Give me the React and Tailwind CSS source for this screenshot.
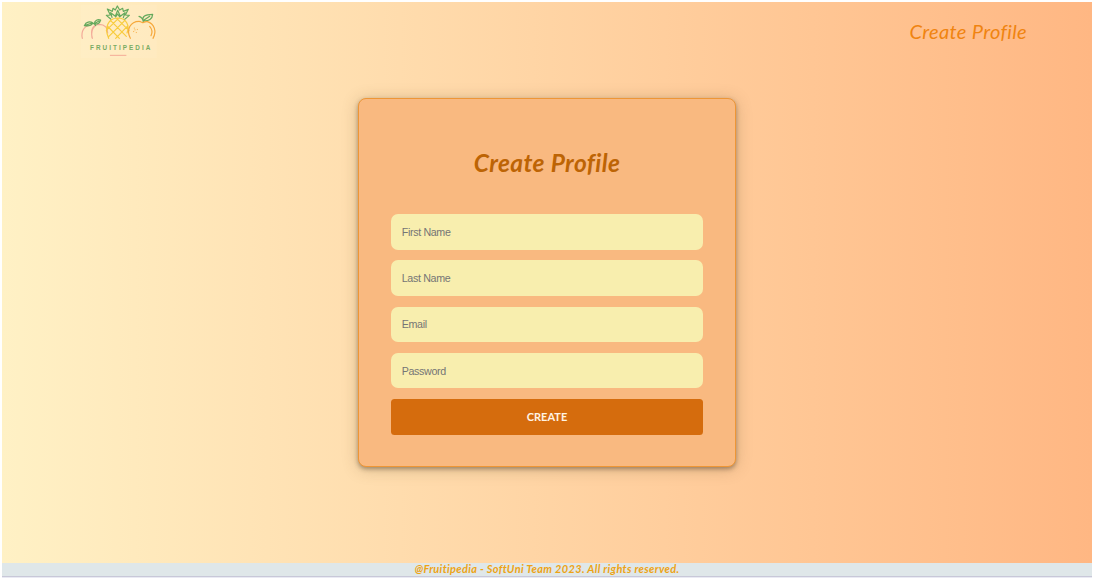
function Logo() {
  return (
    <svg className="h-16 w-[100px]" viewBox="0 0 300 192" fill="none" strokeWidth="3.6" strokeLinecap="round" strokeLinejoin="round">
      <rect x="32" y="14" width="228" height="160" fill="#ffffff" opacity="0.07" />
      <g stroke="#f3aa98">
        <path d="M37 115C32 94 43 77 62 75M67 115C60 88 70 74 87 73C105 73 114 84 113 99M74 79C66 87 63 98 66 113" />
      </g>
      <g stroke="#65a95c">
        <path d="M43 77C48 65 60 63 69 69C63 78 53 79 43 77ZM43 77L66 69M69 70C73 72 76 74 77 77M73 71C74 61 83 57 92 60C89 70 82 74 73 71ZM73 71L87 63" />
        <path d="M122 57L109 46L121 45L112 27L127 34L129 25L136 30L142 18L149 30L158 25L160 34L175 28L166 45L178 46L164 58M126 52L122 38L136 49L143 31L151 49L165 38L160 53M137 51L143 42L149 51" />
        <path d="M219 62C216 50 224 43 248 43C247 57 237 64 219 62ZM219 62L239 49M207 49C214 51 219 57 220 66" />
      </g>
      <g stroke="#f8cc3e">
        <path d="M116 115C101 82 116 54 143 54C169 54 180 77 171 99M112 78L148 115M122 62L169 109M140 55L177 92M174 77L137 115M164 62L116 110M145 55L109 91" />
      </g>
      <g stroke="#f6a83b">
        <path d="M181 115C167 89 182 64 207 64C214 64 214 68 218 68C223 66 226 64 232 65C253 71 261 94 249 115M239 79C247 88 247 99 243 107" />
        <path strokeWidth="2.5" d="M193 84V85M202 88V89M191 94V95M199 97V98M195 89V90" />
      </g>
      <text x="60" y="149" textLength="181" lengthAdjust="spacing" fill="#79ab63" className="font-['Liberation_Sans',sans-serif] text-[19px] font-bold">FRUITIPEDIA</text>
      <path d="M121 166H168" stroke="#f3a795" strokeWidth="2.8" />
    </svg>
  );
}

function Field({ type = "text", placeholder }) {
  return (
    <input
      type={type}
      placeholder={placeholder}
      aria-label={placeholder}
      className="block h-[35.5px] w-full rounded-[7px] bg-[#f8eeae] px-[11px] font-['Liberation_Sans',Arial,sans-serif] text-[10.7px] tracking-[-0.35px] text-[#555] outline-none placeholder:text-[#757575]"
    />
  );
}

export default function App() {
  return (
    <div className="flex h-[580px] w-full flex-col overflow-hidden bg-white px-[2px] pt-[2px] font-['Lato',sans-serif]">
      <div className="flex h-[560.5px] shrink-0 flex-col bg-linear-to-r from-[#fff1c5] to-[#ffb783]">
        <header className="flex h-[62px] shrink-0 items-start justify-between pr-[65px] pl-[68px]">
          <a href="#" aria-label="Fruitipedia" className="-mt-[2px] block">
            <Logo />
          </a>
          <a href="#" className="mt-[14px] text-[20px] leading-[30px] tracking-[0.35px] whitespace-nowrap text-[#f08410] italic">Create Profile</a>
        </header>
        <main className="mt-[34px] flex justify-center">
          <form className="flex h-[369px] w-[377.5px] flex-col rounded-[8px] border border-[#ee9636] bg-[#f9b980] px-[31.5px] shadow-[0_2px_4px_rgba(70,55,40,0.42),0_2px_16px_rgba(100,80,40,0.28)]">
            <h1 className="mt-[45px] text-center text-[24.5px] leading-[38px] font-bold tracking-[0.4px] whitespace-nowrap text-[#bd6404] italic">Create Profile</h1>
            <div className="mt-[32.3px] flex flex-col gap-[10.7px]">
              <Field placeholder="First Name" />
              <Field placeholder="Last Name" />
              <Field placeholder="Email" />
              <Field type="password" placeholder="Password" />
              <button type="button" className="h-[35.5px] w-full rounded-[3.5px] bg-[#d56c0d] pt-px text-[11px] font-bold text-[#fff3e4]">CREATE</button>
            </div>
          </form>
        </main>
      </div>
      <footer className="flex h-[14.5px] shrink-0 items-center justify-center border-b border-[#c8c8d8] bg-[#dfe7e9] text-[11px] leading-[14px] font-bold tracking-[0.32px] whitespace-nowrap text-[#eda315] italic">
        <p>@Fruitipedia - SoftUni Team 2023. All rights reserved.</p>
      </footer>
      <div className="h-px bg-[#e9eaf3]" />
    </div>
  );
}
